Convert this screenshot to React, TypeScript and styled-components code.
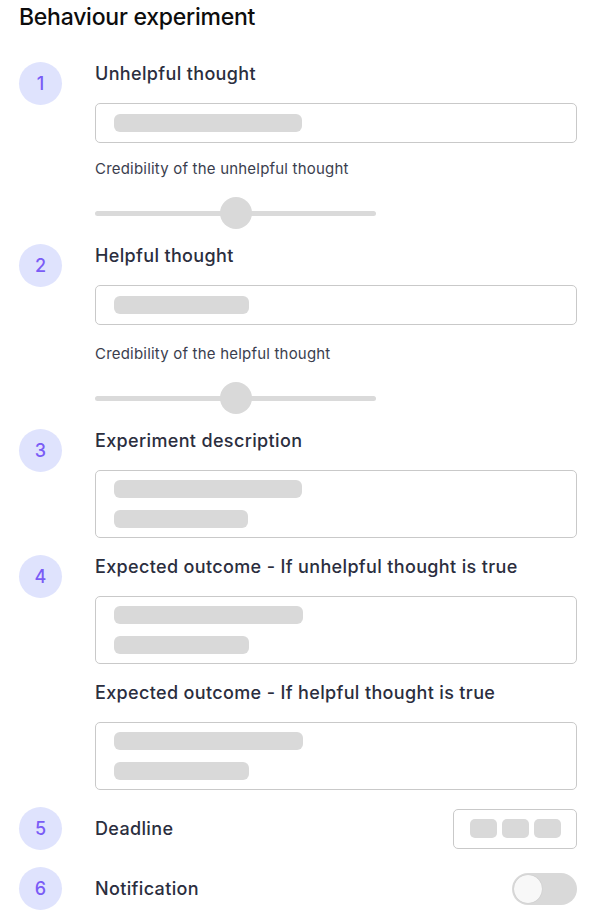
import { createGlobalStyle, styled } from 'styled-components';

const GlobalStyle = createGlobalStyle`
    * { box-sizing: border-box; }
    body {
        margin: 0;
        background: #ffffff;
        font-family: Inter, "Noto Sans", sans-serif;
    }
`;

const Page = styled.main`
    width: 591px;
    padding: 3px 14px 0 19px;
    display: flex;
    flex-direction: column;
`;

const Title = styled.h1`
    margin: 0 0 31px 0;
    font-size: 23px;
    line-height: 28px;
    font-weight: 500;
    letter-spacing: -0.25px;
    color: #0d0d0d;
`;

const Steps = styled.div`
    display: flex;
    flex-direction: column;
    gap: 17px;
`;

const Step = styled.section<{ $center?: boolean }>`
    display: flex;
    align-items: ${p => p.$center ? 'center' : 'flex-start'};
    gap: 33px;
`;

const Badge = styled.div`
    flex: 0 0 43px;
    height: 43px;
    border-radius: 50%;
    background: #dfe3fd;
    color: #7a5cf6;
    display: flex;
    align-items: center;
    justify-content: center;
    font-size: 18px;
    font-weight: 500;
`;

const Body = styled.div`
    flex: 1;
    display: flex;
    flex-direction: column;
    gap: 17px;
`;

const Label = styled.h2`
    margin: 0;
    font-size: 18px;
    line-height: 24px;
    font-weight: 500;
    letter-spacing: 0.35px;
    color: #2b2e3e;
`;

const Caption = styled.p<{ $shift?: number }>`
    margin: ${p => p.$shift ?? 0}px 0 0 0;
    font-size: 15px;
    line-height: 20px;
    font-weight: 400;
    letter-spacing: 0.2px;
    color: #3b3e4e;
`;

const Field = styled.div<{ $lines?: number }>`
    border: 1px solid #c9c9c9;
    border-radius: 5px;
    height: ${p => (p.$lines ?? 1) > 1 ? '68px' : '40px'};
    padding: 0 18px;
    display: flex;
    flex-direction: column;
    justify-content: center;
    gap: 12px;
`;

const Skeleton = styled.div<{ $w: number }>`
    width: ${p => p.$w}px;
    height: 18px;
    border-radius: 6px;
    background: #d9d9d9;
`;

const SliderWrap = styled.div`
    position: relative;
    width: 281px;
    height: 32px;
    margin-top: 1px;
    margin-bottom: -2px;
    display: flex;
    align-items: center;
`;

const Track = styled.div`
    width: 100%;
    height: 5px;
    border-radius: 3px;
    background: #dadada;
`;

const Thumb = styled.div`
    position: absolute;
    top: 0;
    width: 32px;
    height: 32px;
    border-radius: 50%;
    background: #d9d9d9;
    transform: translateX(-50%);
`;

const Spacer = styled.div`
    flex: 1;
`;

const DateBox = styled.div`
    width: 124px;
    height: 40px;
    border: 1px solid #c9c9c9;
    border-radius: 5px;
    display: flex;
    align-items: center;
    justify-content: center;
    gap: 5px;
`;

const Chip = styled.div`
    width: 27px;
    height: 19px;
    border-radius: 5px;
    background: #d9d9d9;
`;

const Toggle = styled.div`
    width: 65px;
    height: 32px;
    border-radius: 16px;
    background: #d9d9d9;
    padding: 2px;
    display: flex;
    align-items: center;
`;

const Knob = styled.div`
    width: 28px;
    height: 28px;
    border-radius: 50%;
    background: #f8f8f8;
    box-shadow: 0 0 1px rgba(0,0,0,0.2);
`;

function Slider({ value }: { value: number }) {
    return (
        <SliderWrap>
            <Track />
            <Thumb style={{ left: `${value}%` }} />
        </SliderWrap>
    );
}

function Input({ bars }: { bars: number[] }) {
    return (
        <Field $lines={bars.length}>
            {bars.map((w, i) => <Skeleton key={i} $w={w} />)}
        </Field>
    );
}

function App() {
    return (
        <Page>
            <GlobalStyle />
            <Title>Behaviour experiment</Title>
            <Steps>
                <Step>
                    <Badge>1</Badge>
                    <Body>
                        <Label>Unhelpful thought</Label>
                        <Input bars={[188]} />
                        <Caption $shift={-1}>Credibility of the unhelpful thought</Caption>
                        <Slider value={50} />
                    </Body>
                </Step>
                <Step>
                    <Badge>2</Badge>
                    <Body>
                        <Label>Helpful thought</Label>
                        <Input bars={[135]} />
                        <Caption $shift={2}>Credibility of the helpful thought</Caption>
                        <Slider value={50} />
                    </Body>
                </Step>
                <Step>
                    <Badge>3</Badge>
                    <Body>
                        <Label>Experiment description</Label>
                        <Input bars={[188, 134]} />
                    </Body>
                </Step>
                <Step>
                    <Badge>4</Badge>
                    <Body>
                        <Label>Expected outcome - If unhelpful thought is true</Label>
                        <Input bars={[189, 135]} />
                        <Label>Expected outcome - If helpful thought is true</Label>
                        <Input bars={[189, 135]} />
                    </Body>
                </Step>
                <Step $center>
                    <Badge>5</Badge>
                    <Label>Deadline</Label>
                    <Spacer />
                    <DateBox>
                        <Chip />
                        <Chip />
                        <Chip />
                    </DateBox>
                </Step>
                <Step $center>
                    <Badge>6</Badge>
                    <Label>Notification</Label>
                    <Spacer />
                    <Toggle>
                        <Knob />
                    </Toggle>
                </Step>
            </Steps>
        </Page>
    );
}

export default App;
